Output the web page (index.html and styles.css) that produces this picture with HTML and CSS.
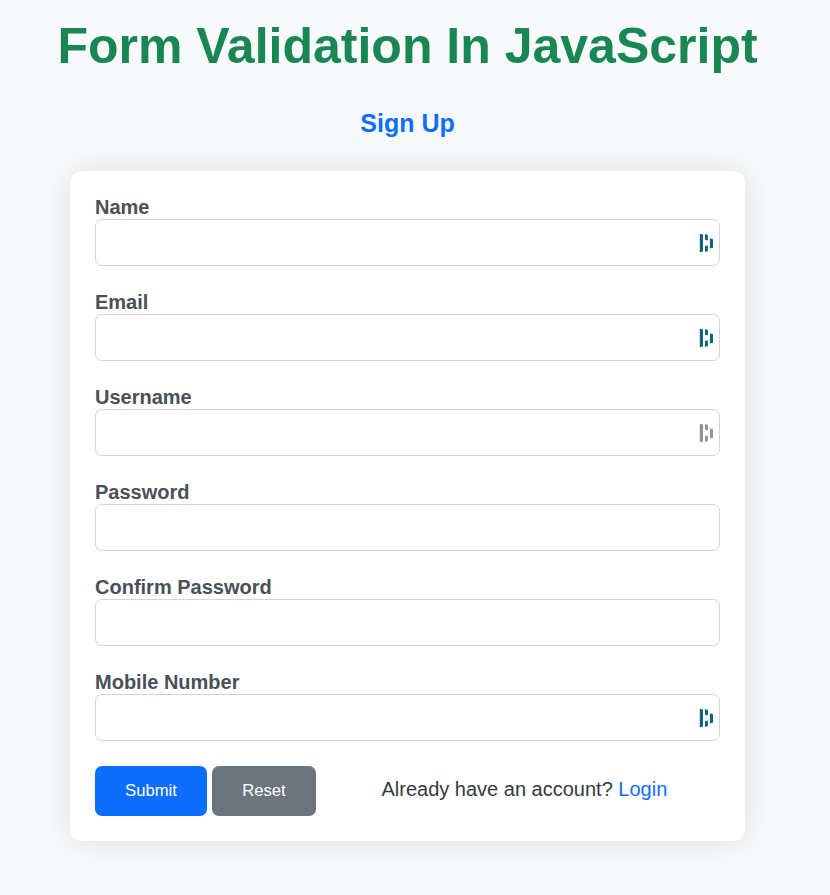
FILE: index.html
```html
<!DOCTYPE html>
<html lang="en">
<head>
<meta charset="utf-8">
<title>Form Validation</title>
<link rel="stylesheet" href="styles.css">
</head>
<body>
<svg class="defs" aria-hidden="true"><symbol id="dash" viewBox="0 0 14 20"><path d="M.8 .7L4 1.500V18.600L.8 19.200ZM6 1L8.900 1.900V7.400L6 6.700ZM6 13L8.900 12.400V18L6 18.900ZM10.900 5.300L14 6.200V14.700L10.900 15.600Z" fill="currentColor"/></symbol></svg>
<h1 class="title">Form Validation In JavaScript</h1>
<h2 class="subtitle">Sign Up</h2>
<form class="card">
<div class="field"><label for="name">Name</label><div class="control"><input id="name" type="text"><svg class="mark"><use href="#dash"/></svg></div></div>
<div class="field"><label for="email">Email</label><div class="control"><input id="email" type="email"><svg class="mark"><use href="#dash"/></svg></div></div>
<div class="field"><label for="user">Username</label><div class="control"><input id="user" type="text"><svg class="mark muted"><use href="#dash"/></svg></div></div>
<div class="field"><label for="pass">Password</label><div class="control"><input id="pass" type="password"></div></div>
<div class="field"><label for="confirm">Confirm Password</label><div class="control"><input id="confirm" type="password"></div></div>
<div class="field"><label for="mobile">Mobile Number</label><div class="control"><input id="mobile" type="text"><svg class="mark"><use href="#dash"/></svg></div></div>
<div class="actions"><button class="btn submit" type="button">Submit</button><button class="btn reset" type="reset">Reset</button><p class="login">Already have an account? <a href="#">Login</a></p></div>
</form>
</body>
</html>
```
FILE: styles.css
```css
* { box-sizing: border-box; }
body { margin: 0; padding: 16px 15px 0 0; background: #f8f9fa; color: #343a40; font: 20px/23px "Liberation Sans", Arial, sans-serif; min-height: 895px; }
.defs { position: absolute; width: 0; height: 0; }
.title { margin: 0; text-align: center; color: #198754; font-size: 50px; line-height: 60px; }
.subtitle { margin: 33px 0 0; text-align: center; color: #0d6efd; font-size: 25px; line-height: 29px; }
.card { width: 675px; height: 670px; margin: 33px auto 0; padding: 25px; background: #fff; border-radius: 12px; box-shadow: 0 0 32px rgba(0,0,0,.1); }
.field { height: 70px; margin-bottom: 25px; }
.field label { display: block; height: 23px; font-weight: bold; color: #495057; }
.control { position: relative; height: 47px; }
.control input { display: block; width: 100%; height: 47px; border: 1px solid #ced4da; border-radius: 7px; background: #fff; outline: 0; padding: 0 30px 0 12px; font: inherit; }
.mark { position: absolute; right: 7px; top: 14px; width: 14px; height: 20px; color: #0e6478; }
.mark.muted { color: #969392; }
.actions { display: flex; align-items: center; gap: 5px; height: 50px; }
.btn { height: 50px; padding: 0; border: 0; border-radius: 7px; color: #fff; font: 16.667px "Liberation Sans", Arial, sans-serif; }
.submit { width: 112px; background: #0d6efd; }
.reset { width: 104px; background: #6c757d; }
.login { margin: 0 0 4px 60.5px; white-space: nowrap; }
.login a { color: #0d6efd; text-decoration: none; }
```
